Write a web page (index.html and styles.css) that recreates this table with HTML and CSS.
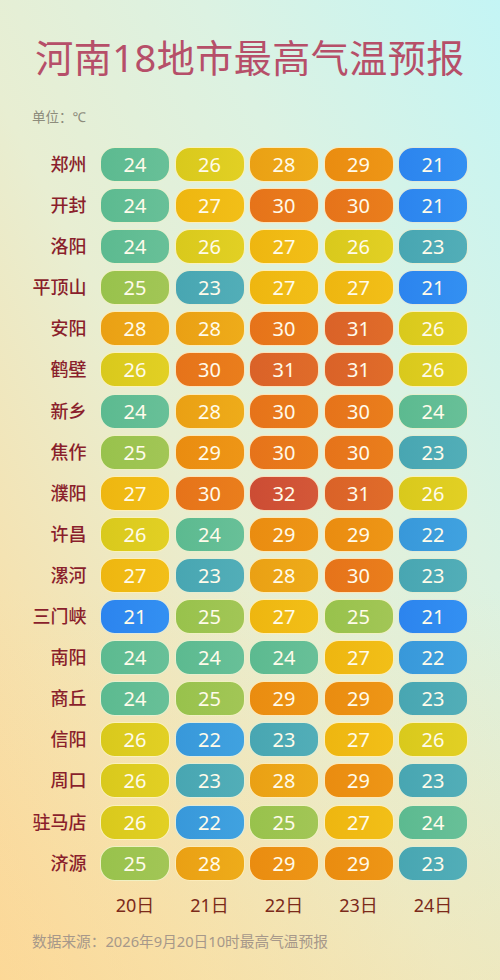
FILE: index.html
```html
<!DOCTYPE html>
<html lang="zh-CN">
<head>
    <meta charset="UTF-8">
    <meta name="viewport" content="width=device-width, initial-scale=1.0">
    <title>河南18地市最高气温预报</title>
    <link rel="stylesheet" href="styles.css">
</head>
<body>
<div class="page">
    <h1 class="title">河南18地市最高气温预报</h1>
    <div class="unit">单位：℃</div>

    <div class="table">
        <div class="city">郑州</div><div class="cell t24">24</div><div class="cell t26">26</div><div class="cell t28">28</div><div class="cell t29">29</div><div class="cell t21">21</div>
        <div class="city">开封</div><div class="cell t24">24</div><div class="cell t27">27</div><div class="cell t30">30</div><div class="cell t30">30</div><div class="cell t21">21</div>
        <div class="city">洛阳</div><div class="cell t24">24</div><div class="cell t26">26</div><div class="cell t27">27</div><div class="cell t26">26</div><div class="cell t23">23</div>
        <div class="city">平顶山</div><div class="cell t25">25</div><div class="cell t23">23</div><div class="cell t27">27</div><div class="cell t27">27</div><div class="cell t21">21</div>
        <div class="city">安阳</div><div class="cell t28">28</div><div class="cell t28">28</div><div class="cell t30">30</div><div class="cell t31">31</div><div class="cell t26">26</div>
        <div class="city">鹤壁</div><div class="cell t26">26</div><div class="cell t30">30</div><div class="cell t31">31</div><div class="cell t31">31</div><div class="cell t26">26</div>
        <div class="city">新乡</div><div class="cell t24">24</div><div class="cell t28">28</div><div class="cell t30">30</div><div class="cell t30">30</div><div class="cell t24">24</div>
        <div class="city">焦作</div><div class="cell t25">25</div><div class="cell t29">29</div><div class="cell t30">30</div><div class="cell t30">30</div><div class="cell t23">23</div>
        <div class="city">濮阳</div><div class="cell t27">27</div><div class="cell t30">30</div><div class="cell t32">32</div><div class="cell t31">31</div><div class="cell t26">26</div>
        <div class="city">许昌</div><div class="cell t26">26</div><div class="cell t24">24</div><div class="cell t29">29</div><div class="cell t29">29</div><div class="cell t22">22</div>
        <div class="city">漯河</div><div class="cell t27">27</div><div class="cell t23">23</div><div class="cell t28">28</div><div class="cell t30">30</div><div class="cell t23">23</div>
        <div class="city">三门峡</div><div class="cell t21">21</div><div class="cell t25">25</div><div class="cell t27">27</div><div class="cell t25">25</div><div class="cell t21">21</div>
        <div class="city">南阳</div><div class="cell t24">24</div><div class="cell t24">24</div><div class="cell t24">24</div><div class="cell t27">27</div><div class="cell t22">22</div>
        <div class="city">商丘</div><div class="cell t24">24</div><div class="cell t25">25</div><div class="cell t29">29</div><div class="cell t29">29</div><div class="cell t23">23</div>
        <div class="city">信阳</div><div class="cell t26">26</div><div class="cell t22">22</div><div class="cell t23">23</div><div class="cell t27">27</div><div class="cell t26">26</div>
        <div class="city">周口</div><div class="cell t26">26</div><div class="cell t23">23</div><div class="cell t28">28</div><div class="cell t29">29</div><div class="cell t23">23</div>
        <div class="city">驻马店</div><div class="cell t26">26</div><div class="cell t22">22</div><div class="cell t25">25</div><div class="cell t27">27</div><div class="cell t24">24</div>
        <div class="city">济源</div><div class="cell t25">25</div><div class="cell t28">28</div><div class="cell t29">29</div><div class="cell t29">29</div><div class="cell t23">23</div>

        <div></div><div class="date">20日</div><div class="date">21日</div><div class="date">22日</div><div class="date">23日</div><div class="date">24日</div>
    </div>

    <div class="source">数据来源：2026年9月20日10时最高气温预报</div>
</div>
</body>
</html>
```

FILE: styles.css
```css
html, body {
    margin: 0;
    padding: 0;
}
body {
    font-family: "Noto Sans", "Noto Sans CJK SC", sans-serif;
    width: 500px;
    height: 980px;
    overflow: hidden;
    background:
        linear-gradient(to bottom, rgba(255,255,255,0) 60%, rgba(252,220,150,0.35) 100%),
        linear-gradient(to bottom left, #c4f5f5 0%, #dcf2e2 30%, #e8eed2 55%, #f5e2b0 80%, #fcd698 100%);
}
.page {
    padding: 0 32px;
}
.title {
    margin: 0 -32px;
    padding-top: 32px;
    height: 50px;
    text-align: center;
    white-space: nowrap;
    font-size: 38px;
    line-height: 50px;
    font-weight: 400;
    letter-spacing: 0.5px;
    color: #b64f69;
}
.unit {
    margin-top: 26px;
    font-size: 13.5px;
    line-height: 18px;
    color: #8d8c7c;
}
.table {
    margin-top: 21px;
    margin-left: -32px;
    display: grid;
    grid-template-columns: 95.5px repeat(5, 70px);
    grid-auto-rows: 35px;
    column-gap: 4.5px;
    row-gap: 6.1px;
}
.city {
    text-align: right;
    font-size: 18px;
    line-height: 35px;
    font-weight: 500;
    color: #8a1f2c;
    margin-right: 9px;
}
.cell {
    border-radius: 15px;
    border: 1px solid rgba(255, 248, 215, 0.85);
    box-sizing: border-box;
    text-align: center;
    font-size: 20px;
    line-height: 33px;
    color: #fffbea;
}
.date {
    text-align: center;
    font-size: 18px;
    line-height: 30px;
    margin-top: 3px;
    color: #7b2a1a;
}
.source {
    margin-top: 8px;
    font-size: 14.7px;
    color: #a6988a;
}

.t21 { background: linear-gradient(to right, #2c84ee, #3390f2); }
.t22 { background: linear-gradient(to right, #3898da, #40a2e0); }
.t23 { background: linear-gradient(to right, #48a6b2, #52aeb8); }
.t24 { background: linear-gradient(to right, #5cba90, #68c098); }
.t25 { background: linear-gradient(to right, #98c24c, #a2c656); }
.t26 { background: linear-gradient(to right, #d9c91c, #e2d024); }
.t27 { background: linear-gradient(to right, #eeb610, #f2bf18); }
.t28 { background: linear-gradient(to right, #eaa014, #eeac1a); }
.t29 { background: linear-gradient(to right, #ea8c10, #ee9616); }
.t30 { background: linear-gradient(to right, #e6731a, #ea7e1c); }
.t31 { background: linear-gradient(to right, #da6228, #e06c2a); }
.t32 { background: linear-gradient(to right, #cc4c34, #d45838); }
```
